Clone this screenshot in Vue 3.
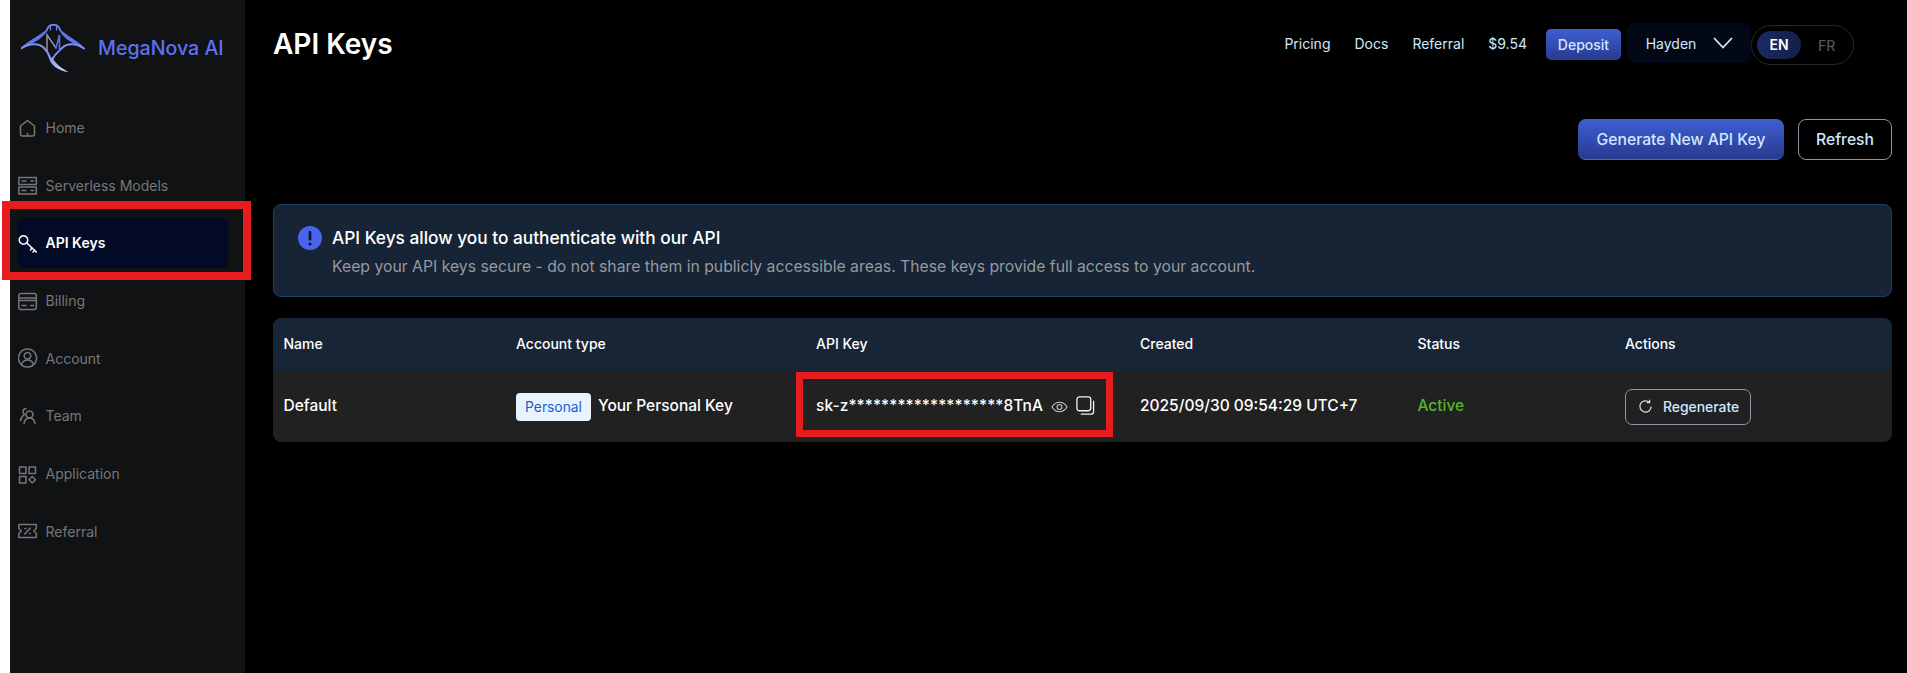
<template>
  <div class="page">
    <aside class="sidebar">
      <div class="brand">
        <svg class="logo" viewBox="0 0 64 48" fill="none" stroke-linecap="round">
          <defs>
            <linearGradient id="tail" x1="0" y1="0" x2="1" y2="1">
              <stop offset="0" stop-color="#7f93f2" />
              <stop offset="1" stop-color="#d3dbfa" />
            </linearGradient>
          </defs>
          <path fill="#5d75ee" d="M0 24.500C8 17 18 13 26 6C21 15 10 19 0 24.500Z" stroke="#5d75ee" stroke-width="1.500" />
          <path fill="#5d75ee" d="M63 24.500C56 17 46 13 39 6C43 15 54 19 63 24.500Z" stroke="#5d75ee" stroke-width="1.500" />
          <path stroke="#6f84f0" stroke-width="1.800" d="M26 6C27 2 29 .8 32.500 .8C36 .8 38 2 39 6" />
          <path stroke="#6f84f0" stroke-width="1.200" d="M29.500 1.500V6M35.500 1.500V6" />
          <path stroke="#7e92f2" stroke-width="2" d="M0 24.500C9 19 18 19 23 24C26 27 28 30 29 34" />
          <path stroke="#7e92f2" stroke-width="2" d="M63 24.500C55 19 46 19 41 24C37 28 33 31 31 36" />
          <path fill="url(#tail)" d="M27.500 32C29 41 37 47 47.500 48C40 44 34 39 31.500 34Z" />
          <path stroke="#8f97b0" stroke-width="1.500" d="M26 27V11L35 24" />
          <path stroke="#5d75ee" stroke-width="1.500" d="M35 24L38.500 11V27" />
        </svg>
        <span class="brand-name">MegaNova AI</span>
      </div>
      <nav class="nav">
        <a v-for="item in navItems" :key="item.label" class="nav-item" :class="{ active: item.active }">
          <svg class="nav-icon" viewBox="0 0 20 20" fill="none" stroke="currentColor" stroke-width="1.5" stroke-linecap="round" stroke-linejoin="round">
            <path v-for="d in item.paths" :key="d" :d="d" />
          </svg>
          <span>{{ item.label }}</span>
        </a>
      </nav>
    </aside>

    <main class="main">
      <header class="topbar">
        <h1>API Keys</h1>
        <div class="top-right">
          <a class="top-link">Pricing</a>
          <a class="top-link">Docs</a>
          <a class="top-link">Referral</a>
          <span class="top-link balance">$9.54</span>
          <button class="deposit">Deposit</button>
          <div class="user-box">
            <span>Hayden</span>
            <svg width="20" height="12" viewBox="0 0 20 12" fill="none" stroke="#d7e6f7" stroke-width="1.8"><path d="M1 1l9 9.500L19 1" /></svg>
          </div>
          <div class="lang">
            <span class="lang-on">EN</span>
            <span class="lang-off">FR</span>
          </div>
        </div>
      </header>

      <div class="actions">
        <button class="btn-primary">Generate New API Key</button>
        <button class="btn-ghost">Refresh</button>
      </div>

      <section class="notice">
        <svg class="notice-icon" viewBox="0 0 24 24">
          <circle cx="12" cy="12" r="12" fill="#4a63ee" />
          <rect x="10.600" y="5" width="2.800" height="9.500" rx="1.200" fill="#10192c" />
          <circle cx="12" cy="18" r="1.600" fill="#10192c" />
        </svg>
        <div>
          <p class="notice-title">API Keys allow you to authenticate with our API</p>
          <p class="notice-text">Keep your API keys secure - do not share them in publicly accessible areas. These keys provide full access to your account.</p>
        </div>
      </section>

      <div class="table">
        <div class="row head">
          <div>Name</div>
          <div>Account type</div>
          <div>API Key</div>
          <div>Created</div>
          <div>Status</div>
          <div>Actions</div>
        </div>
        <div class="row body">
          <div>Default</div>
          <div class="type-cell"><span class="badge">Personal</span>Your Personal Key</div>
          <div class="key-cell">
            <span class="key-text">sk-z*******************8TnA</span>
            <svg class="eye" viewBox="0 0 18 12" fill="none" stroke="#c9c9c9" stroke-width="1.100"><path d="M1 6C3 2.800 6 1 9 1s6 1.800 8 5c-2 3.200-5 5-8 5S3 9.200 1 6Z" /><circle cx="9" cy="6" r="2.600" /></svg>
            <svg class="copy" viewBox="0 0 20 20" fill="none" stroke="#f2f2f2" stroke-width="1.400"><rect x="1" y="1" width="14.500" height="14.500" rx="2.500" /><path d="M18.500 5v11.500a2.500 2.500 0 0 1-2.500 2.500H5" /></svg>
            <span class="red-box"></span>
          </div>
          <div>2025/09/30 09:54:29 UTC+7</div>
          <div class="active-text">Active</div>
          <div>
            <button class="regen">
              <svg width="15" height="15" viewBox="0 0 16 16" fill="none" stroke="#d2e0ee" stroke-width="1.300"><path d="M14 8a6 6 0 1 1-2-4.500" /><path d="M12.400 .9v3h-3" /></svg>
              Regenerate
            </button>
          </div>
        </div>
      </div>
    </main>

    <span class="red-side"></span>
  </div>
</template>

<script setup>
const navItems = [
  { label: 'Home', paths: ['M2.500 8 9.500 2.500l7 5.500v8a2 2 0 0 1-2 2h-10a2 2 0 0 1-2-2Z', 'M9.500 15.500v2.500'] },
  { label: 'Serverless Models', paths: ['M.8 2.500h17.500v7H.8Z', 'M.8 12h17.500v7H.8Z', 'M4 6h4', 'M4 15.500h4', 'M13 6h2.500', 'M13 15.500h2.500'] },
  { label: 'API Keys', active: true, paths: ['M5.500 2.800a4.200 4.200 0 1 1-.01 0Z', 'M8.800 10l9.500 9', 'M14 15l-1.500 2', 'M16.500 17.400l-1.500 1.600'] },
  { label: 'Billing', paths: ['M.8 4.500a2 2 0 0 1 2-2h13.500a2 2 0 0 1 2 2v12a2 2 0 0 1-2 2H2.800a2 2 0 0 1-2-2Z', 'M.8 7h17.500', 'M.8 9.500h17.500', 'M4 14.500h4', 'M12.500 14.500h3'] },
  { label: 'Account', paths: ['M9.500 1a9 9 0 1 1-.01 0Z', 'M9.500 4.500a3.300 3.300 0 1 1-.01 0Z', 'M3.500 16.500c1-3 3.500-4.500 6-4.500s5 1.500 6 4.500'] },
  { label: 'Team', paths: ['M11.500 5a3.500 3.500 0 1 1-.01 0Z', 'M6 17.500c.5-3.500 2.500-5.500 5.500-5.500s5 2 5.500 5.500', 'M8 2.500a3 3 0 0 0-3 3c0 1.200.5 2.200 1.500 2.800C4.500 9.500 3 12 2.500 14.500'] },
  { label: 'Application', paths: ['M1.500 3h6.500v6.500H1.500Z', 'M11 3h6.500v6.500H11Z', 'M1.500 12.500h6.500V19H1.500Z', 'M14.200 12.500l3.300 3.200-3.300 3.300-3.200-3.300Z'] },
  { label: 'Referral', paths: ['M.8 3.500h17.500v4l-2.500 2.500 2.500 2.500v4H.8v-4L3.300 10 .8 7.500Z', 'M6.800 13l5.500-6', 'M6.800 7.500h.8', 'M11.500 12.500h.8'] }
]
</script>

<style scoped>
.page {
  position: relative;
  display: flex;
  width: 1907px;
  height: 673px;
  overflow: hidden;
  background: #fff;
  padding-left: 10px;
  box-sizing: border-box;
  font-family: Inter, "Liberation Sans", sans-serif;
  color: #fff;
}

.sidebar {
  width: 235px;
  flex: none;
  background: #111214;
  padding: 24px 17px 0 8px;
  box-sizing: border-box;
}

.brand {
  display: flex;
  align-items: center;
  gap: 13px;
  margin-left: 3px;
  height: 48px;
}

.logo {
  width: 64px;
  height: 48px;
  flex: none;
}

.brand-name {
  font-size: 19.600px;
  font-weight: 500;
  color: #5b73f0;
  white-space: nowrap;
}

.nav {
  margin-top: 30px;
  display: flex;
  flex-direction: column;
  gap: 6.700px;
}

.nav-item {
  display: flex;
  align-items: center;
  gap: 7.500px;
  height: 51px;
  border-radius: 6px;
  font-size: 14px;
  color: #75787b;
}

.nav-item.active {
  color: #fff;
  font-weight: 600;
  background: #030a25;
}

.nav-icon {
  width: 20px;
  height: 20px;
  flex: none;
}

.main {
  flex: 1;
  background: #000;
  padding: 0 15px 0 28px;
  min-width: 0;
}

.topbar {
  display: flex;
  align-items: flex-start;
  justify-content: space-between;
}

h1 {
  margin: 26px 0 0;
  font-size: 28px;
  line-height: 36px;
  font-weight: 600;
}

.top-right {
  display: flex;
  align-items: center;
  height: 63px;
  padding-top: 23px;
  box-sizing: border-box;
  margin-right: 38px;
}

.top-link {
  font-size: 14px;
  color: #cfe8ff;
  margin-right: 24px;
}

.top-link.balance {
  margin-right: 19px;
}

.deposit {
  width: 75px;
  height: 31px;
  margin-top: 2px;
  border: 0;
  border-radius: 5px;
  background: linear-gradient(#3f5fd3, #263a8e);
  color: #cfe8ff;
  font: 500 14px Inter, sans-serif;
  margin-right: 6px;
}

.user-box {
  width: 124px;
  height: 40px;
  display: flex;
  align-items: center;
  justify-content: center;
  gap: 17px;
  padding-left: 1px;
  background: #030817;
  border-radius: 8px;
  font-size: 14px;
  color: #cfe8ff;
  box-sizing: border-box;
}

.lang {
  width: 103px;
  height: 40px;
  align-self: flex-start;
  margin-top: 2px;
  box-sizing: border-box;
  border: 1px solid #26282c;
  border-radius: 20px;
  display: flex;
  align-items: center;
  padding-left: 5px;
  font-size: 14px;
  font-weight: 500;
}

.lang-on {
  width: 44px;
  height: 28px;
  line-height: 28px;
  text-align: center;
  border-radius: 14px;
  background: linear-gradient(90deg, #1a2a60, #142049);
  color: #fff;
  font-weight: 600;
}

.lang-off {
  margin-left: 17px;
  color: #555;
}

.actions {
  display: flex;
  justify-content: flex-end;
  gap: 14px;
  margin-top: 56px;
}

.btn-primary {
  width: 206px;
  height: 41px;
  border: 0;
  border-bottom: 1px solid #4a68d8;
  border-radius: 8px;
  background: linear-gradient(#3f5fd3, #263a8e);
  color: #cfe8ff;
  font: 500 15.700px Inter, sans-serif;
}

.btn-ghost {
  width: 94px;
  height: 41px;
  border: 1px solid #8a97a6;
  border-radius: 8px;
  background: transparent;
  color: #cfe8ff;
  font: 500 15.700px Inter, sans-serif;
}

.notice {
  display: flex;
  gap: 10px;
  align-items: flex-start;
  height: 93px;
  margin-top: 44px;
  padding: 21px 0 0 24px;
  box-sizing: border-box;
  background: #162436;
  border: 1px solid #1f3f66;
  border-radius: 8px;
}

.notice-icon {
  width: 24px;
  height: 24px;
  flex: none;
}

.notice-title {
  margin: 0;
  font-size: 17.300px;
  line-height: 24px;
  font-weight: 500;
  color: #fff;
}

.notice-text {
  margin: 5px 0 0;
  font-size: 15.750px;
  line-height: 24px;
  color: #95999e;
}

.table {
  margin-top: 21px;
  border-radius: 8px;
  overflow: hidden;
}

.row {
  display: grid;
  grid-template-columns: 232.500px 300px 324px 277.500px 207.500px 1fr;
  align-items: center;
  padding-left: 10.500px;
  font-size: 14px;
  box-sizing: border-box;
}

.head {
  height: 53px;
  padding-bottom: 2px;
  background: #182536;
  font-weight: 500;
}

.body {
  height: 71px;
  padding-bottom: 2px;
  background: #212121;
  font-size: 15.500px;
  font-weight: 500;
}

.type-cell {
  display: flex;
  align-items: center;
}

.badge {
  width: 75px;
  height: 28px;
  line-height: 28px;
  text-align: center;
  margin: 2px 7px 0 0;
  border-radius: 4px;
  background: #e8f3ff;
  color: #1a5fd0;
  font-size: 13.800px;
  font-weight: 400;
}

.key-cell {
  position: relative;
  align-self: stretch;
  display: flex;
  align-items: center;
}

.key-text {
  letter-spacing: .09px;
}

.eye {
  width: 17px;
  height: 12px;
  margin-left: 8px;
  margin-top: 2px;
}

.copy {
  width: 19px;
  height: 19px;
  margin-left: 8px;
}

.red-box {
  position: absolute;
  left: -20px;
  top: 1px;
  width: 317px;
  height: 65px;
  box-sizing: border-box;
  border: 7px solid #e61c1f;
}

.active-text {
  color: #52b52f;
}

.regen {
  display: flex;
  align-items: center;
  gap: 10px;
  width: 126px;
  height: 36px;
  margin-top: 2px;
  padding: 0 0 0 12px;
  box-sizing: border-box;
  border: 1px solid #8a97a6;
  border-radius: 7px;
  background: transparent;
  color: #cfe8ff;
  font: 500 13.900px Inter, sans-serif;
}

.red-side {
  position: absolute;
  left: 2px;
  top: 201px;
  width: 249px;
  height: 79px;
  box-sizing: border-box;
  border: 8px solid #e61c1f;
}
</style>
